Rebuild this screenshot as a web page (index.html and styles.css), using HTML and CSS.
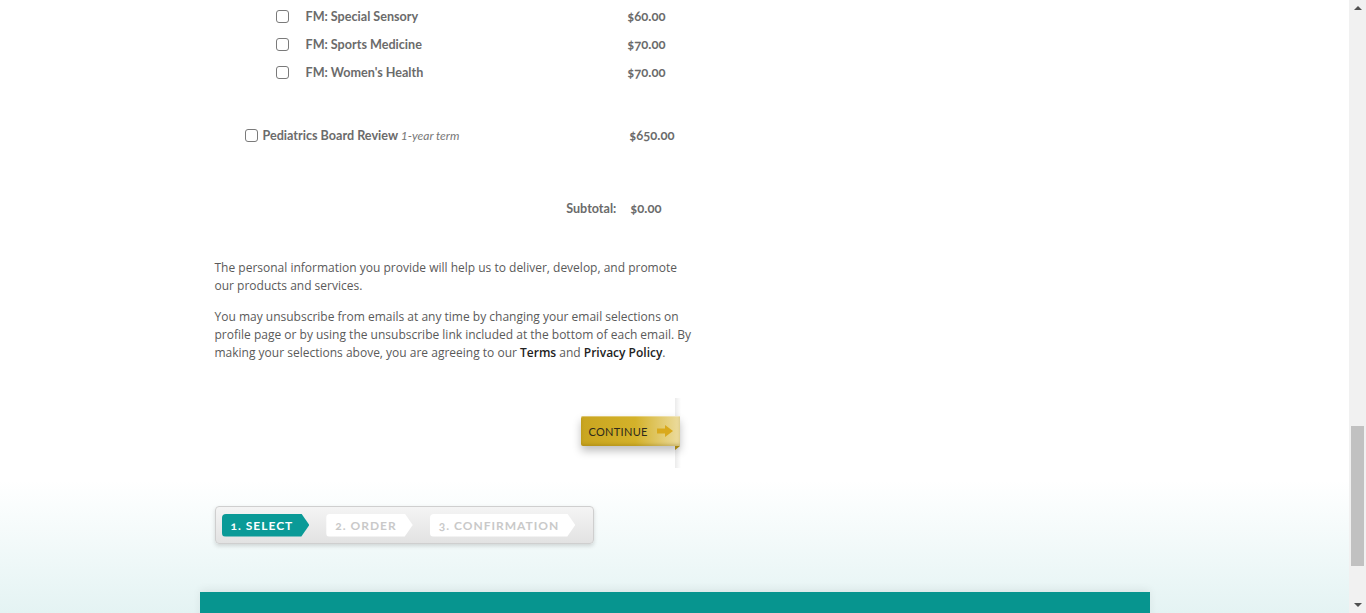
FILE: index.html
```html
<!DOCTYPE html>
<html>
<head>
<meta charset="utf-8">
<link rel="stylesheet" href="styles.css">
</head>
<body>
<div class="viewport">
  <div class="page">
    <div class="container">
      <div class="form">
        <div class="row sub">
          <input type="checkbox" class="cb">
          <span class="label">FM: Special Sensory</span>
          <span class="price">$60.00</span>
        </div>
        <div class="row sub">
          <input type="checkbox" class="cb">
          <span class="label">FM: Sports Medicine</span>
          <span class="price">$70.00</span>
        </div>
        <div class="row sub">
          <input type="checkbox" class="cb">
          <span class="label">FM: Women's Health</span>
          <span class="price">$70.00</span>
        </div>
        <div class="row main">
          <input type="checkbox" class="cb">
          <span class="label">Pediatrics Board Review <em class="term">1-year term</em></span>
          <span class="price">$650.00</span>
        </div>
        <div class="row subtotal">
          <span class="sub-label">Subtotal:</span>
          <span class="sub-value">$0.00</span>
        </div>
        <div class="legal">
          <p>The personal information you provide will help us to deliver, develop, and promote our products and services.</p>
          <p>You may unsubscribe from emails at any time by changing your email selections on profile page or by using the unsubscribe link included at the bottom of each email. By making your selections above, you are agreeing to our <a href="#">Terms</a> and <a href="#">Privacy Policy</a>.</p>
        </div>
        <div class="actions">
          <button class="continue">
            <span>CONTINUE</span>
            <svg class="arrow" width="16" height="12" viewBox="0 0 16 12"><path d="M0 3.5 H8 V0 L16 6 L8 12 V8.5 H0 Z" fill="#d9a91c"/></svg>
          </button>
        </div>
        <div class="steps">
          <span class="step active">1. SELECT</span>
          <span class="step">2. ORDER</span>
          <span class="step">3. CONFIRMATION</span>
        </div>
      </div>
      <div class="footer-bar"></div>
    </div>
  </div>
  <div class="scrollbar">
    <span class="sb-arrow up"></span>
    <div class="sb-track"><div class="sb-thumb"></div></div>
    <span class="sb-arrow down"></span>
  </div>
</div>
</body>
</html>
```

FILE: styles.css
```css
* { box-sizing: border-box; }
html, body { margin: 0; padding: 0; height: 613px; overflow: hidden; }
body { font-family: Lato, "Open Sans", sans-serif; color: #666; }

.viewport { display: flex; height: 613px; }

.page {
  flex: 1;
  background: linear-gradient(to bottom, #ffffff 0, #ffffff 480px, #f3fafa 540px, #e4f3f3 613px);
  overflow: hidden;
}

.container { width: 950px; margin: 0 auto; }

.form { padding-left: 15px; width: 495px; padding-top: 2px; }

.row { display: flex; align-items: center; height: 28px; font-size: 12.6px; font-weight: 700; color: #6b6b6b; }

.cb {
  appearance: none; -webkit-appearance: none;
  width: 13px; height: 13px; margin: 0;
  border: 1px solid #7a7a7a; border-radius: 3px; background: #fff;
  flex: none;
}

.price { margin-left: auto; font-variant-numeric: oldstyle-nums; font-size: 13px; }

.row.sub { padding-left: 61px; width: 451px; }
.row.sub .cb { margin-right: 17px; }

.row.main { padding-left: 30px; width: 460px; margin-top: 35px; }
.row.main .cb { margin-right: 5px; }
.term { font-weight: 400; font-style: italic; color: #777; font-size: 12px; }

.row.subtotal { margin-top: 45px; justify-content: flex-end; width: 447px; }
.sub-label { margin-right: 14px; }
.sub-value { font-variant-numeric: oldstyle-nums; font-size: 13px; }

.legal { margin-top: 37px; width: 480px; font-family: "Open Sans", sans-serif; font-size: 12px; line-height: 18px; color: #5a5a5a; }
.legal p { margin: 0 0 13px; }
.legal a { color: #222; font-weight: 600; text-decoration: none; }

.actions { display: flex; justify-content: flex-end; align-items: flex-start; width: 480px; margin-top: 36px; height: 70px; padding-top: 18px; position: relative; }
.actions::after {
  content: ""; position: absolute; right: 14px; top: 0; width: 6px; height: 70px;
  background: linear-gradient(to right, rgba(0,0,0,0.08), rgba(0,0,0,0));
}
.continue {
  position: relative;
  display: flex; align-items: center; gap: 9px;
  width: 99px; height: 30px; margin-right: 15px; padding: 0 0 0 8px;
  border: none; border-radius: 2px 0 0 2px;
  background: linear-gradient(to right, #c9a520 0%, #d4b22a 55%, #ecdca0 100%);
  box-shadow: 0 5px 8px rgba(0,0,0,0.25), inset 0 1px 0 rgba(255,255,255,0.35), inset 0 -2px 3px rgba(120,90,0,0.25);
  font-family: Lato, sans-serif; font-size: 11px; letter-spacing: 0.3px; color: #2e2a1c;
  z-index: 1;
}
.continue::after {
  content: ""; position: absolute; right: 0; bottom: -4px;
  border-top: 4px solid #a5850f; border-right: 5px solid transparent;
}
.arrow { flex: none; }

.steps {
  margin-top: 38px; width: 379px; height: 38px;
  border: 1px solid #cfcfcf; border-radius: 4px;
  background: linear-gradient(to bottom, #f4f4f4, #e2e2e2);
  box-shadow: 0 2px 4px rgba(0,0,0,0.15);
  display: flex; align-items: center; gap: 17px; padding-left: 6px;
}
.step {
  height: 23px; display: flex; align-items: center;
  background: #fff; color: #c9c9c9;
  font-family: Lato, sans-serif; font-weight: 700; font-size: 12px; letter-spacing: 1px;
  padding: 0 16px 0 9px;
  border-radius: 4px 0 0 4px;
  clip-path: polygon(0 0, calc(100% - 8px) 0, 100% 50%, calc(100% - 8px) 100%, 0 100%);
  font-variant-numeric: oldstyle-nums;
}
.step.active { background: #0a9a97; color: #fff; }

.footer-bar {
  margin-top: 48px; height: 40px; background: #07958f;
  box-shadow: 0 -3px 8px rgba(0,0,0,0.06);
}

.scrollbar { width: 17px; flex: none; background: #f1f1f1; display: flex; flex-direction: column; align-items: center; }
.sb-arrow { width: 0; height: 0; border-left: 4px solid transparent; border-right: 4px solid transparent; margin: 6px 0; }
.sb-arrow.up { border-bottom: 4px solid #505050; }
.sb-arrow.down { border-top: 4px solid #505050; }
.sb-track { flex: 1; width: 100%; display: flex; flex-direction: column; justify-content: flex-end; padding: 0 2px 31px; }
.sb-thumb { height: 140px; background: #c1c1c1; }
```
